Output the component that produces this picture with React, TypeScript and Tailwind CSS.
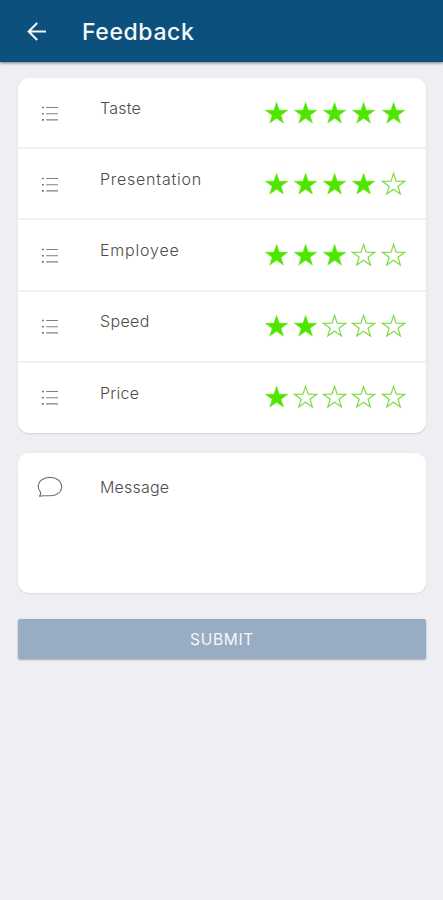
const rows = [
  { label: "Taste", rating: 5, text: "tracking-[0.2px]" },
  { label: "Presentation", rating: 4, text: "tracking-[0.75px]" },
  { label: "Employee", rating: 3, text: "tracking-[0.8px]" },
  { label: "Speed", rating: 2, text: "tracking-[0.35px]" },
  { label: "Price", rating: 1, text: "tracking-[0.3px]" },
];

function Star({ filled }: { filled: boolean }) {
  return (
    <svg width="29.2" height="24" viewBox="0 0 29.2 24" className="shrink-0">
      <path
        d="M14.6 1.4 L17.2 9.2 L25.8 9.3 L19 14.2 L21.4 22 L14.6 17.3 L7.8 22 L10.2 14.2 L3.4 9.3 L12 9.2 Z"
        fill={filled ? "#4ee600" : "none"}
        stroke={filled ? "#5ce80c" : "#7edb45"}
        strokeWidth={filled ? 0.6 : 1.2}
      />
    </svg>
  );
}

function ListIcon() {
  return (
    <svg width="18" height="16" viewBox="0 0 18 16" className="ml-[23px] mt-[27.5px] shrink-0" fill="none" stroke="#808080" strokeWidth="1.1">
      <path d="M5.2 1.5H17M5.2 7.8H17M5.2 13.9H17" />
      <path d="M1 1.5H2.7M1 7.8H2.7M1 13.9H2.7" stroke="#666" strokeWidth="1.6" />
    </svg>
  );
}

export default function App() {
  return (
    <div className="h-[900px] w-[443px] overflow-hidden bg-[#eeeef3] font-['Inter','Open_Sans',sans-serif] text-[#4c4c4c]">
      <header className="flex h-[62px] items-center bg-[#0c507e] text-white shadow-[0_1px_3px_rgba(0,0,0,0.5)]">
        <svg width="20" height="20" viewBox="0 0 20 20" className="ml-[27px]" fill="none" stroke="#f4f8fb" strokeWidth="2.1">
          <path d="M19 10.5H2M10.2 2L1.7 10.5L10.2 19" />
        </svg>
        <h1 className="ml-[35px] pt-[2px] text-[23px] font-medium leading-[30px] tracking-[0.6px] text-[#f4f8fb]">Feedback</h1>
      </header>

      <main className="pl-[18px] pr-[17px] pt-[16px]">
        <section className="overflow-hidden rounded-[11px] bg-white shadow-[0_1px_2px_rgba(0,0,0,0.12)]">
          {rows.map((row, i) => (
            <div key={row.label} className={`flex items-start ${i < 4 ? "h-[71.2px] border-b-2 border-[#f0f0f2]" : "h-[70.2px]"}`}>
              <ListIcon />
              <span className={`ml-[41px] mt-[17.8px] flex-1 text-[16px] font-light leading-[24px] ${row.text}`}>{row.label}</span>
              <div className="mr-[18.2px] mt-[22.5px] flex">
                {[1, 2, 3, 4, 5].map((n) => (
                  <Star key={n} filled={n <= row.rating} />
                ))}
              </div>
            </div>
          ))}
        </section>

        <section className="mt-[20.5px] flex h-[139.5px] items-start rounded-[11px] bg-white shadow-[0_1px_2px_rgba(0,0,0,0.09)]">
          <svg width="26" height="22" viewBox="0 0 26 22" className="ml-[19px] mt-[23px] shrink-0" fill="none" stroke="#707070" strokeWidth="1.1">
            <path d="M2.3 20.5C3.8 19 4.1 17.5 3.2 15.6C1.8 14 1.2 12.4 1.2 10.6C1.2 5.2 6.2 1.4 12.8 1.4C19.6 1.4 24.6 5.2 24.6 10.7C24.6 16.2 19.6 19.8 13 19.8H6.6C5 19.8 3.6 20 2.3 20.5Z" />
          </svg>
          <span className="ml-[37px] mt-[21.5px] text-[16px] font-light leading-[24px] tracking-[0.2px]">Message</span>
        </section>

        <button className="mt-[26px] flex h-[40.5px] w-full items-center justify-center rounded-[2px] bg-[#98adc4] pt-[1px] text-[15.5px] leading-[20px] tracking-[0.7px] text-[#f5f8fc] shadow-[0_1px_2px_rgba(0,0,0,0.3)]">
          SUBMIT
        </button>
      </main>
    </div>
  );
}
